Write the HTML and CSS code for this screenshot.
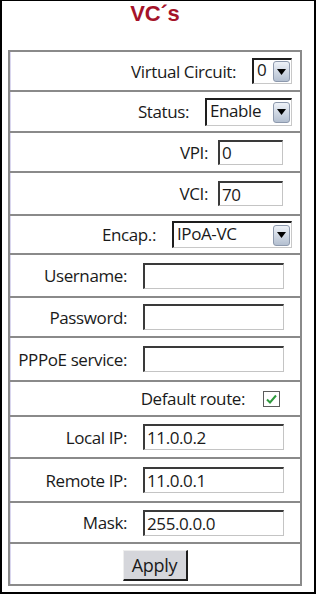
FILE: index.html
```html
<!DOCTYPE html>
<html>
<head>
<meta charset="utf-8">
<link rel="stylesheet" href="styles.css">
</head>
<body>
<div class="page">
  <div class="wrap">
    <h1 class="title">VC´s</h1>
    <div class="form">
      <div class="row">
        <span class="label">Virtual Circuit:</span>
        <div class="select sel-vc"><span class="sel-text">0</span><span class="arrow"><svg width="9" height="6" viewBox="0 0 9 6"><path d="M0 0H9L4.5 6Z" fill="#000"/></svg></span></div>
      </div>
      <div class="row">
        <span class="label">Status:</span>
        <div class="select sel-status"><span class="sel-text">Enable</span><span class="arrow"><svg width="9" height="6" viewBox="0 0 9 6"><path d="M0 0H9L4.5 6Z" fill="#000"/></svg></span></div>
      </div>
      <div class="row">
        <span class="label label-short">VPI:</span>
        <input class="field field-short" type="text" value="0">
      </div>
      <div class="row">
        <span class="label label-short">VCI:</span>
        <input class="field field-short" type="text" value="70">
      </div>
      <div class="row">
        <span class="label">Encap.:</span>
        <div class="select sel-encap"><span class="sel-text">IPoA-VC</span><span class="arrow"><svg width="9" height="6" viewBox="0 0 9 6"><path d="M0 0H9L4.5 6Z" fill="#000"/></svg></span></div>
      </div>
      <div class="row">
        <span class="label">Username:</span>
        <input class="field" type="text" value="">
      </div>
      <div class="row">
        <span class="label">Password:</span>
        <input class="field" type="text" value="">
      </div>
      <div class="row">
        <span class="label">PPPoE service:</span>
        <input class="field" type="text" value="">
      </div>
      <div class="row">
        <span class="label label-check">Default route:</span>
        <span class="check"><svg width="13" height="12" viewBox="0 0 13 12"><path d="M2 6.5L5 9.5L11 2.5" fill="none" stroke="#2f9a3e" stroke-width="2"/></svg></span>
      </div>
      <div class="row">
        <span class="label">Local IP:</span>
        <input class="field" type="text" value="11.0.0.2">
      </div>
      <div class="row">
        <span class="label">Remote IP:</span>
        <input class="field" type="text" value="11.0.0.1">
      </div>
      <div class="row">
        <span class="label">Mask:</span>
        <input class="field" type="text" value="255.0.0.0">
      </div>
      <div class="row row-center">
        <button class="apply" type="button">Apply</button>
      </div>
    </div>
  </div>
</div>
</body>
</html>
```

FILE: styles.css
```css
* { box-sizing: border-box; }
html, body { margin: 0; padding: 0; background: #fff; }
body { font-family: "Open Sans", "Liberation Sans", sans-serif; color: #1a1a1a; }

.page {
  width: 316px;
  height: 594px;
  border: 2px solid #000;
  border-top-width: 1px;
  background: #fff;
}

.wrap {
  width: 294px;
  margin-left: 6px;
}

.title {
  margin: 0 0 24px;
  height: 25px;
  font-family: "Liberation Sans", Arial, sans-serif;
  font-size: 22px;
  line-height: 25px;
  font-weight: 700;
  color: #a5132a;
  text-align: center;
  letter-spacing: -0.2px;
}

.form {
  border: 2px solid #8a8a8a;
  box-shadow: inset 1px 0 0 #d9d6ee;
  display: grid;
  grid-template-rows: 38px 41px 40px 43px 39px 43px 40px 44px 35px 42px 44px 41px 42px;
}

.row {
  display: flex;
  align-items: center;
  justify-content: flex-end;
  border-top: 2px solid #8a8a8a;
  padding-right: 8px;
  font-size: 17px;
  letter-spacing: -0.4px;
}
.row:first-child { border-top: 0; }
.row-center { justify-content: center; padding-right: 0; }

.label { margin-right: 16px; white-space: nowrap; }
.label-short { margin-right: 10px; }
.label-check { margin-right: 18px; }

.field {
  width: 141px;
  height: 26px;
  margin-right: 8px;
  padding: 0 0 0 2px;
  font-family: "Open Sans", "Liberation Sans", sans-serif;
  font-size: 17px;
  letter-spacing: -0.4px;
  color: #1a1a1a;
  background: #fff;
  border-style: solid;
  border-width: 2px 1px 1px 2px;
  border-color: #3a3a3a #c4c4c4 #c4c4c4 #3a3a3a;
  outline: none;
}
.field-short { width: 65px; height: 25px; margin-right: 9px; }

.select {
  display: flex;
  align-items: center;
  justify-content: space-between;
  height: 27px;
  padding: 0 1px 0 3px;
  background: #fff;
  border-style: solid;
  border-width: 2px 1px 1px 2px;
  border-color: #1e1e1e #c8c8c8 #c8c8c8 #1e1e1e;
  font-size: 17px;
}
.sel-vc { width: 40px; height: 26px; }
.sel-status { width: 87px; height: 28px; }
.sel-encap { width: 120px; }
.sel-text { line-height: 20px; margin-top: -3px; }

.arrow {
  display: flex;
  align-items: center;
  justify-content: center;
  width: 17px;
  height: 21px;
  border: 1px solid #8d99ad;
  border-radius: 3px;
  background: linear-gradient(#eef2f8, #b3bfd0);
}

.check {
  display: flex;
  align-items: center;
  justify-content: center;
  width: 17px;
  height: 16px;
  margin-right: 12px;
  border: 1px solid #5c5c5c;
  background: #fff;
}

.apply {
  width: 65px;
  height: 31px;
  margin-top: 2px;
  padding: 0;
  font-family: "Open Sans", "Liberation Sans", sans-serif;
  font-size: 18px;
  letter-spacing: -0.3px;
  color: #1a1a1a;
  background: #d5d6db;
  border-style: solid;
  border-width: 1px 2px 2px 1px;
  border-color: #eeeeee #1e1e1e #1e1e1e #eeeeee;
}
```
